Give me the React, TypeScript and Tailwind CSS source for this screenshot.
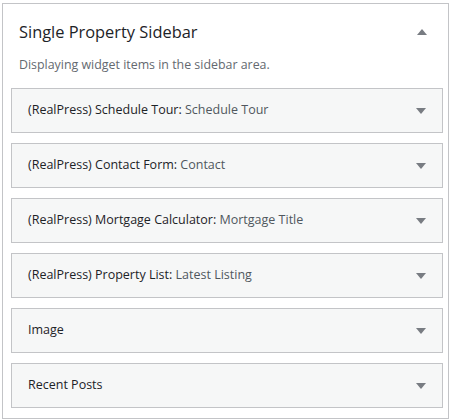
const items: { title: string; sub?: string }[] = [
  { title: '(RealPress) Schedule Tour:', sub: 'Schedule Tour' },
  { title: '(RealPress) Contact Form:', sub: 'Contact' },
  { title: '(RealPress) Mortgage Calculator:', sub: 'Mortgage Title' },
  { title: '(RealPress) Property List:', sub: 'Latest Listing' },
  { title: 'Image' },
  { title: 'Recent Posts' },
]

function Arrow({ up }: { up?: boolean }) {
  return (
    <svg width="10" height="6" viewBox="0 0 10 6" className="shrink-0">
      <path d={up ? 'M0 6 L5 0 L10 6 Z' : 'M0 0 L10 0 L5 6 Z'} fill="#787c82" />
    </svg>
  )
}

export default function App() {
  return (
    <div className="w-[452px] h-[420px] bg-white pl-[2px] pt-[3px] font-['Segoe_UI','Open_Sans',sans-serif]">
      <div className="w-[447px] h-[416px] border border-[#c3c4c7] bg-white">
        <div className="flex items-center justify-between pl-[16px] pr-[21px] pt-[16px]">
          <h2 className="text-[16.4px] leading-[24px] text-[#1d2327]">Single Property Sidebar</h2>
          <Arrow up />
        </div>
        <p className="pl-[16px] pt-[11px] text-[12.4px] leading-[20px] text-[#646970]">
          Displaying widget items in the sidebar area.
        </p>
        <div className="mt-[13px] ml-[8px] flex w-[432px] flex-col gap-[10px]">
          {items.map((item) => (
            <div
              key={item.title}
              className="flex h-[45px] items-center justify-between border border-[#c3c4c7] bg-[#f6f7f7] pl-[16px] pr-[16px]"
            >
              <span className="text-[12.5px] text-[#1d2327]">
                {item.title}
                {item.sub && <span className="text-[#50575e]"> {item.sub}</span>}
              </span>
              <Arrow />
            </div>
          ))}
        </div>
      </div>
    </div>
  )
}
